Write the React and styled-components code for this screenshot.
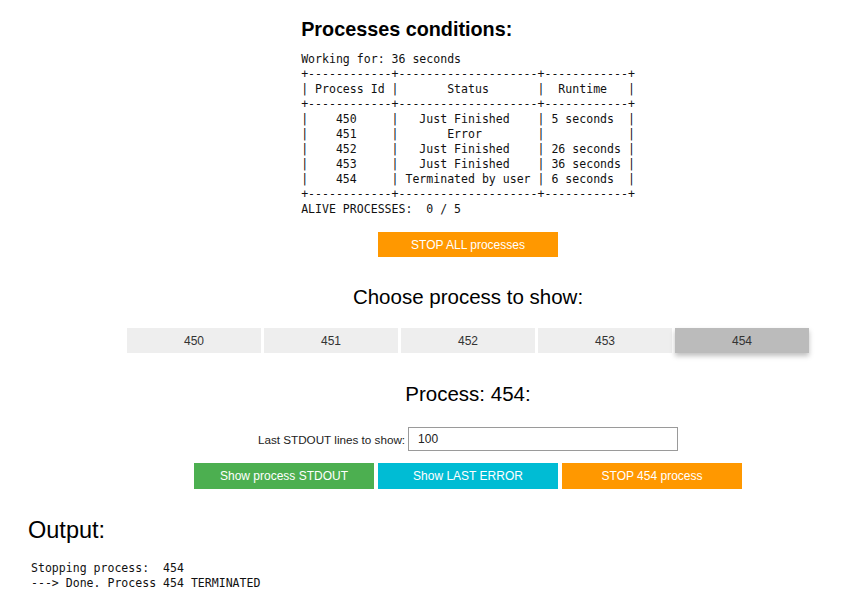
import React, { useState } from 'react'
import styled, { createGlobalStyle } from 'styled-components'

const PROCESSES = [
	{ id: 450, status: 'Just Finished', runtime: '5 seconds' },
	{ id: 451, status: 'Error', runtime: '' },
	{ id: 452, status: 'Just Finished', runtime: '26 seconds' },
	{ id: 453, status: 'Just Finished', runtime: '36 seconds' },
	{ id: 454, status: 'Terminated by user', runtime: '6 seconds' }
]

const COLORS = {
	orange: '#ff9800',
	green: '#4caf50',
	cyan: '#00bcd4'
}

const GlobalStyle = createGlobalStyle`
	html, body {
		margin: 0;
		padding: 0;
		background: #fff;
		overflow: hidden;
	}
	body {
		font-family: "Liberation Sans", Arial, sans-serif;
		color: #000;
	}
`

const Page = styled.div`
	padding-top: 18px;
`

// the page column sits a little right of the window centre
const Centered = styled.section`
	display: flex;
	flex-direction: column;
	align-items: center;
	padding-left: 73px;
`

const Conditions = styled.div`
	display: flex;
	flex-direction: column;
	align-items: flex-start;
`

const Title = styled.h2`
	margin: 0;
	font-size: 19.8px;
	line-height: 23px;
	font-weight: bold;
`

const Mono = styled.pre`
	margin: ${p => p.$margin || '0'};
	font-family: "DejaVu Sans Mono", "Liberation Mono", monospace;
	font-size: 11.55px;
	line-height: 15px;
	color: #111;
	white-space: pre;
`

const Heading = styled.h3`
	margin: ${p => p.$top}px 0 0;
	font-size: ${p => p.$size || 20.5}px;
	line-height: ${p => p.$line || 23}px;
	font-weight: normal;
	color: #000;
`

const ActionButton = styled.button`
	width: 180px;
	height: ${p => p.$height || 26}px;
	margin-top: ${p => p.$top || 0}px;
	border: none;
	padding: 0;
	background: ${p => COLORS[p.$color]};
	color: #fff;
	font-family: "Liberation Sans", Arial, sans-serif;
	font-size: 12px;
	cursor: pointer;
`

const Tabs = styled.div`
	display: grid;
	grid-template-columns: repeat(5, 134px);
	gap: 3px;
	margin-top: 20px;
`

const Tab = styled.button`
	height: 25px;
	border: none;
	padding: 0;
	background: ${p => (p.$active ? '#bbb' : '#eee')};
	box-shadow: ${p => (p.$active ? '0 3px 5px rgba(0,0,0,0.25)' : 'none')};
	color: #333;
	font-family: "Liberation Sans", Arial, sans-serif;
	font-size: 12px;
	cursor: pointer;
`

const InputRow = styled.label`
	display: flex;
	align-items: center;
	gap: 3px;
	margin-top: 22px;
	font-size: 11.7px;
	color: #222;
`

const LinesInput = styled.input`
	width: 270px;
	height: 24px;
	box-sizing: border-box;
	border: 1px solid #9a9a9a;
	padding: 0 9px;
	font-family: "Liberation Sans", Arial, sans-serif;
	font-size: 12px;
	color: #222;
	outline: none;
`

const ButtonRow = styled.div`
	display: flex;
	gap: 4px;
	margin-top: 12px;
`

const Output = styled.section`
	padding-left: 28px;
`

const pad = (s, w, align) => {
	const str = String(s)
	const rest = w - str.length
	if (align === 'left') return ' ' + str + ' '.repeat(Math.max(rest - 1, 0))
	const left = Math.floor(rest / 2)
	return ' '.repeat(left) + str + ' '.repeat(rest - left)
}

const buildTable = () => {
	const sep = '+------------+--------------------+------------+'
	const head = '|' + pad('Process Id', 12) + '|' + pad('Status', 20) + '|' + pad('Runtime', 12) + '|'
	const rows = PROCESSES.map(
		p => '|' + pad(p.id, 12) + '|' + pad(p.status, 20) + '|' + pad(p.runtime, 12, 'left') + '|'
	)
	return [
		'Working for: 36 seconds',
		sep,
		head,
		sep,
		...rows,
		sep,
		'ALIVE PROCESSES:  0 / 5'
	].join('\n')
}

const App = () => {
	const [selected, setSelected] = useState(454)
	const [lines, setLines] = useState('100')

	return (
		<Page>
			<GlobalStyle />
			<Centered>
				<Conditions>
					<Title>Processes conditions:</Title>
					<Mono $margin="11px 0 0">{buildTable()}</Mono>
				</Conditions>
				<ActionButton $color="orange" $top={15} $height={25}>
					STOP ALL processes
				</ActionButton>

				<Heading $top={28}>Choose process to show:</Heading>
				<Tabs>
					{PROCESSES.map(p => (
						<Tab
							key={p.id}
							$active={p.id === selected}
							onClick={() => setSelected(p.id)}
						>
							{p.id}
						</Tab>
					))}
				</Tabs>

				<Heading $top={29}>Process: {selected}:</Heading>
				<InputRow>
					Last STDOUT lines to show:
					<LinesInput value={lines} onChange={e => setLines(e.target.value)} />
				</InputRow>
				<ButtonRow>
					<ActionButton $color="green">Show process STDOUT</ActionButton>
					<ActionButton $color="cyan">Show LAST ERROR</ActionButton>
					<ActionButton $color="orange">STOP {selected} process</ActionButton>
				</ButtonRow>
			</Centered>

			<Output>
				<Heading $top={28} $size={23.5} $line={27}>Output:</Heading>
				<Mono $margin="17px 0 0 3px">
					{`Stopping process:  454\n---> Done. Process 454 TERMINATED`}
				</Mono>
			</Output>
		</Page>
	)
}

export default App
